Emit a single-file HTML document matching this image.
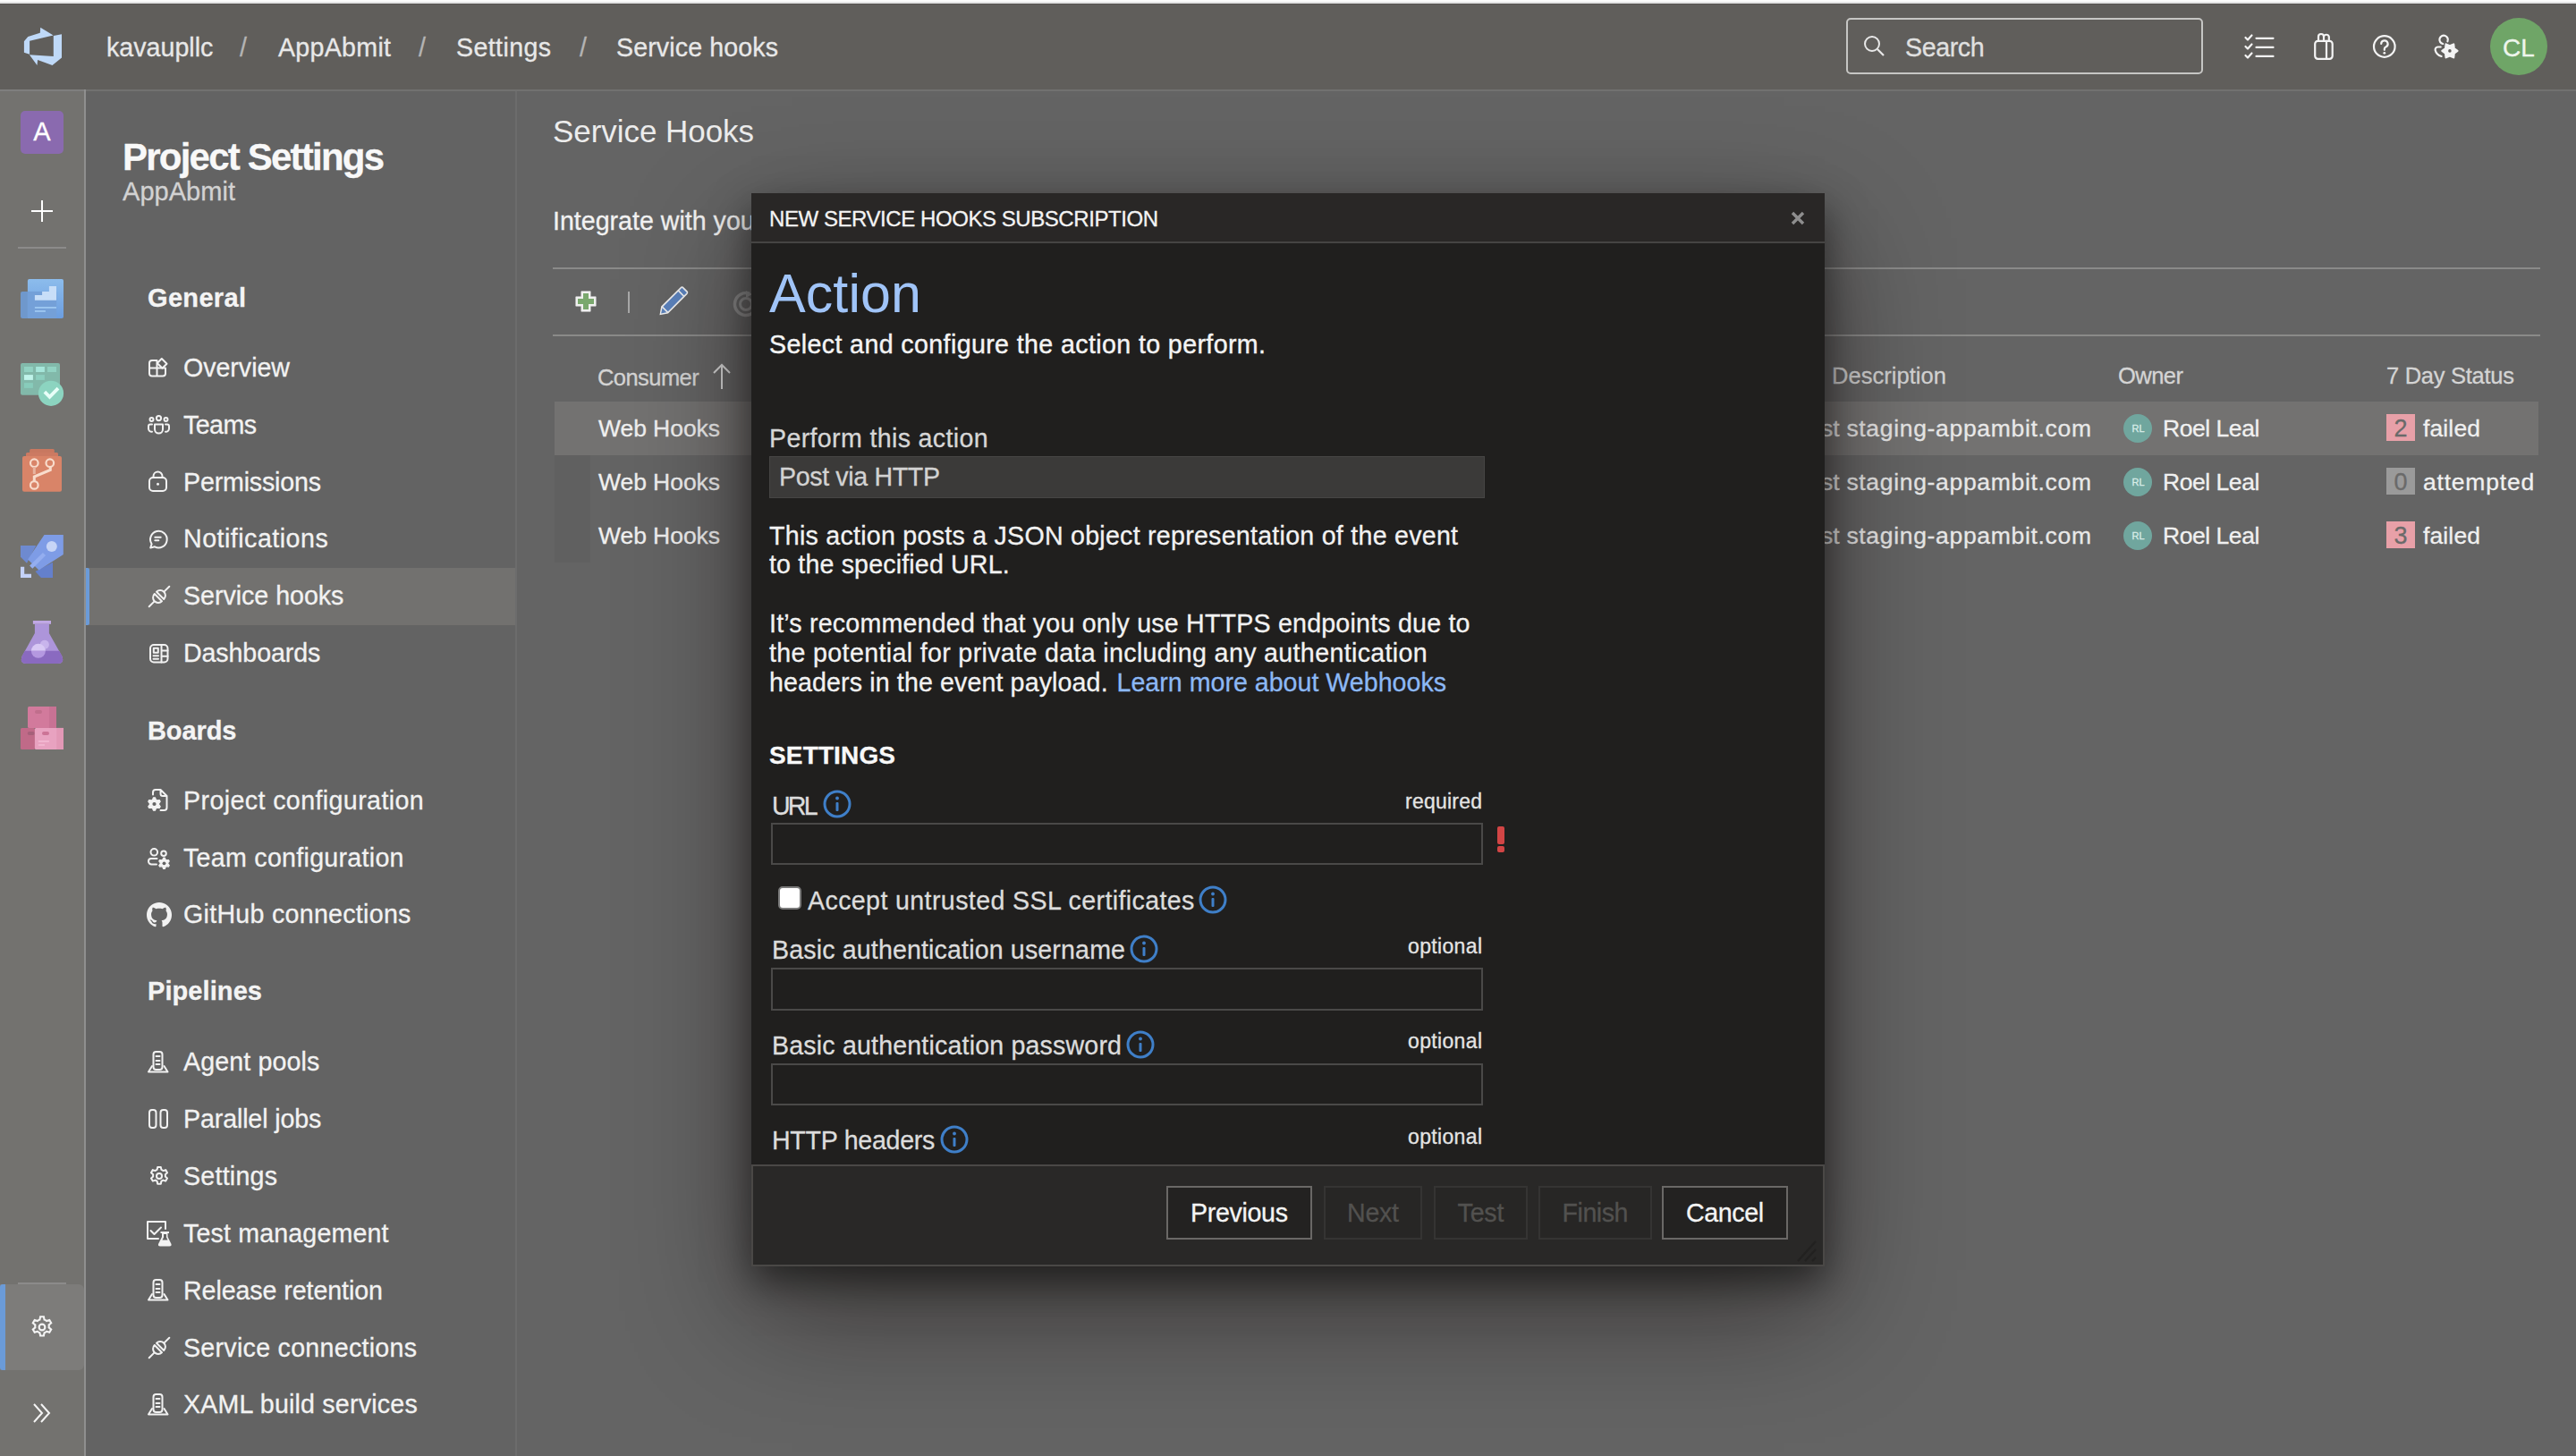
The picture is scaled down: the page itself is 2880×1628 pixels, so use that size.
<!DOCTYPE html>
<html><head><meta charset="utf-8"><title>Service hooks</title>
<style>
html,body{margin:0;padding:0;width:2880px;height:1628px;overflow:hidden;background:#646464}
body{position:relative;font-family:"Liberation Sans", sans-serif}
.t{position:absolute;white-space:nowrap;font-family:"Liberation Sans", sans-serif;-webkit-text-stroke-width:0.3px}
svg{overflow:visible}
</style></head><body>
<div style="position:absolute;left:0px;top:0px;width:2880px;height:2px;background:#fbfbfb"></div>
<div style="position:absolute;left:0px;top:2px;width:2880px;height:2px;background:#e4e4e4"></div>
<div style="position:absolute;left:0px;top:4px;width:2880px;height:1px;background:#575552"></div>
<div style="position:absolute;left:0px;top:5px;width:2880px;height:95px;background:#605e5b"></div>
<div style="position:absolute;left:0px;top:100px;width:2880px;height:1528px;background:#646464"></div>
<div style="position:absolute;left:0px;top:100px;width:2880px;height:2px;background:#717170"></div>
<div style="position:absolute;left:0px;top:100px;width:94px;height:1528px;background:#73726f"></div>
<div style="position:absolute;left:0px;top:100px;width:94px;height:2px;background:#7f7f7e"></div>
<div style="position:absolute;left:94px;top:100px;width:2px;height:1528px;background:#8f8f8f"></div>
<div style="position:absolute;left:96px;top:102px;width:480px;height:1526px;background:#636363"></div>
<div style="position:absolute;left:576px;top:102px;width:2px;height:1526px;background:#6c6c6c"></div>
<svg style="position:absolute;left:20px;top:25px;" width="56" height="56" viewBox="0 0 56 56"><path fill="#bfd9f8" d="M25.2 5.8 L39.6 14.6 L13.1 20.8 L13.1 35.8 L6.9 33.7 L6.9 21.2 L11.3 16 L24.8 11.7 Z"/><path fill="#bfd9f8" d="M39.8 15 L49 13.3 L49 39.6 L38.5 48 L22.1 42.1 L21.5 47.9 L12.9 36.2 L39.8 37.9 Z"/></svg>
<div class="t" style="left:119px;top:33.09px;font-size:28.6px;line-height:40px;color:#e8e8e8;font-weight:400;letter-spacing:0.023px;">kavaupllc</div>
<div class="t" style="left:268px;top:33.09px;font-size:28.6px;line-height:40px;color:#b4b4b4;font-weight:400;">/</div>
<div class="t" style="left:311px;top:33.09px;font-size:28.6px;line-height:40px;color:#e8e8e8;font-weight:400;letter-spacing:0.290px;">AppAbmit</div>
<div class="t" style="left:468px;top:33.09px;font-size:28.6px;line-height:40px;color:#b4b4b4;font-weight:400;">/</div>
<div class="t" style="left:510px;top:33.09px;font-size:28.6px;line-height:40px;color:#e8e8e8;font-weight:400;letter-spacing:0.382px;">Settings</div>
<div class="t" style="left:648px;top:33.09px;font-size:28.6px;line-height:40px;color:#b4b4b4;font-weight:400;">/</div>
<div class="t" style="left:689px;top:33.09px;font-size:28.6px;line-height:40px;color:#e8e8e8;font-weight:400;letter-spacing:0.117px;">Service hooks</div>
<div style="position:absolute;left:2064px;top:20px;width:399px;height:63px;box-sizing:border-box;border:2px solid #c6c6c4;border-radius:5px"></div>
<svg style="position:absolute;left:2083px;top:39px;" width="25" height="25" viewBox="0 0 25 25"><circle cx="10" cy="10" r="8" fill="none" stroke="#e8e8e8" stroke-width="2"/><path d="M16 16 L23 23" stroke="#e8e8e8" stroke-width="2.2"/></svg>
<div class="t" style="left:2130px;top:33.09px;font-size:28.6px;line-height:40px;color:#e0e0e0;font-weight:400;letter-spacing:-0.382px;">Search</div>
<svg style="position:absolute;left:2490px;top:25px;" width="60" height="50" viewBox="0 0 60 50"><path fill="none" stroke="#f4f4f4" stroke-width="2.2" stroke-linecap="round" stroke-linejoin="round" d="M20.5 17 L23 19.5 L27.5 14.5 M20.5 27 L23 29.5 L27.5 24.5 M20.5 37 L23 39.5 L27.5 34.5"/><path fill="none" stroke="#f4f4f4" stroke-width="2.2" stroke-linecap="round" stroke-linejoin="round" d="M32.5 17.8 H51.5 M32.5 27.9 H51.5 M32.5 37.9 H51.5"/></svg>
<svg style="position:absolute;left:2580px;top:30px;" width="40" height="45" viewBox="0 0 40 45"><rect fill="none" stroke="#f4f4f4" stroke-width="2.2" stroke-linecap="round" stroke-linejoin="round" x="8.2" y="15.8" width="19.5" height="20" rx="3.2"/><path fill="none" stroke="#f4f4f4" stroke-width="2.2" stroke-linecap="round" stroke-linejoin="round" d="M21 15.8 V35.8 M12 15.8 V11 a3 3 0 0 1 6 0 V15.8 M18 11 a3 3 0 0 1 5.8 0 V15.8"/></svg>
<svg style="position:absolute;left:2650px;top:36px;" width="32" height="32" viewBox="0 0 32 32"><circle fill="none" stroke="#f4f4f4" stroke-width="2.2" stroke-linecap="round" stroke-linejoin="round" cx="15.8" cy="16" r="11.8"/><path fill="none" stroke="#f4f4f4" stroke-width="2.2" stroke-linecap="round" stroke-linejoin="round" d="M12.2 13 a3.7 3.7 0 1 1 5.2 3.4 c-1.1.5-1.6 1.1-1.6 2.3 V19.8"/><circle cx="15.8" cy="23.3" r="1.4" fill="#f4f4f4"/></svg>
<svg style="position:absolute;left:2715px;top:32px;" width="40" height="40" viewBox="0 0 40 40"><path fill="none" stroke="#f4f4f4" stroke-width="2.2" stroke-linecap="round" stroke-linejoin="round" d="M16.2 17 A4.7 4.7 0 1 1 21.4 14.3"/><path fill="none" stroke="#f4f4f4" stroke-width="2.2" stroke-linecap="round" stroke-linejoin="round" d="M13.7 20.5 H10.5 a3 3 0 0 0 -2.8 3.7 C8.5 27.5 11 30 14.6 31"/><path d="M32.50 24.90 L28.75 27.70 L28.20 32.35 L23.90 30.50 L19.60 32.35 L19.05 27.70 L15.30 24.90 L19.05 22.10 L19.60 17.45 L23.90 19.30 L28.20 17.45 L28.75 22.10 Z" fill="#f4f4f4" stroke="#f4f4f4" stroke-width="2.2" stroke-linejoin="round"/><circle cx="23.9" cy="24.9" r="5.319999999999999" fill="#f4f4f4"/><circle cx="23.9" cy="24.9" r="1.8" fill="#605e5b"/></svg>
<div style="position:absolute;left:2784px;top:20px;width:64px;height:64px;border-radius:50%;background:#6fa567"></div>
<div class="t" style="left:2798.10px;top:33.80px;font-size:28px;line-height:39px;color:#eef5ec;font-weight:400;">CL</div>
<div style="position:absolute;left:23px;top:124px;width:48px;height:48px;background:#8a6aaf;border-radius:5px"></div>
<div class="t" style="left:37.33px;top:127.45px;font-size:29px;line-height:41px;color:#ffffff;font-weight:400;">A</div>
<svg style="position:absolute;left:35px;top:224px;" width="24" height="24" viewBox="0 0 24 24"><path d="M12 0 V24 M0 12 H24" stroke="#ffffff" stroke-width="2"/></svg>
<div style="position:absolute;left:20px;top:276px;width:54px;height:2px;background:#8c8b8a"></div>
<svg style="position:absolute;left:18px;top:305px;" width="58" height="58" viewBox="0 0 58 58"><defs><linearGradient id="gov" x1="0" y1="0" x2="0" y2="1"><stop offset="0" stop-color="#8cbcec"/><stop offset="1" stop-color="#6c9ee0"/></linearGradient></defs><rect x="12.9" y="7" width="40.1" height="44" rx="2" fill="url(#gov)"/><rect x="5" y="20.9" width="9" height="30.1" rx="2" fill="#6f98cc"/><rect x="12.7" y="20.9" width="32.5" height="30.1" fill="#74a0d8"/><path d="M20.9 30.7 V25.1 H29.1 V21.1 H36.9 V14.9 H45 V30.7 Z" fill="#c8def8"/><rect x="20.9" y="38" width="24.1" height="1.9" fill="#9cc6f0"/><rect x="20.9" y="42" width="12" height="1.9" fill="#9cc6f0"/></svg>
<svg style="position:absolute;left:18px;top:400px;" width="58" height="58" viewBox="0 0 58 58"><rect x="5" y="6" width="44" height="35.8" rx="2" fill="#82b9aa"/><rect x="9" y="10" width="9.9" height="6" fill="#92d2c2"/><rect x="22.1" y="10" width="9.8" height="6" fill="#a6e6da"/><rect x="35" y="10" width="10" height="6" fill="#92d2c2"/><rect x="9" y="19.1" width="9.9" height="5.8" fill="#c0f4ea"/><rect x="22.1" y="19.1" width="9.8" height="5.8" fill="#8ccfbe"/><rect x="9" y="28.1" width="9.9" height="5.8" fill="#88ccbb"/><circle cx="39" cy="39.8" r="14.1" fill="#8cd4c0"/><path d="M31.9 38.2 L37.5 43.8 L47 34.2" fill="none" stroke="#e8fff8" stroke-width="3.8"/></svg>
<svg style="position:absolute;left:18px;top:496px;" width="58" height="58" viewBox="0 0 58 58"><rect x="15.1" y="6" width="27.7" height="5" rx="1.5" fill="#c87860"/><rect x="11" y="10" width="36" height="5" rx="1.5" fill="#cc7a62"/><rect x="7" y="14.1" width="44" height="39.7" rx="2" fill="#d98468"/><g fill="none" stroke="#f8dccc" stroke-width="2.2"><circle cx="20.3" cy="21.7" r="4.3"/><circle cx="37.8" cy="21.7" r="4.3"/><circle cx="20.3" cy="46.4" r="4.3"/></g><path d="M20.3 42.1 V37 L38.3 29.5 V26" fill="none" stroke="#f8dccc" stroke-width="3"/><path d="M20.3 26 V34" stroke="#e8b4a0" stroke-width="3"/></svg>
<svg style="position:absolute;left:18px;top:592px;" width="58" height="58" viewBox="0 0 58 58"><path d="M5 18.1 H22.3 L12 37.8 L5 30.7 Z" fill="#6e8ad0"/><path d="M41 36.7 V54 H27.9 L21.5 47 Z" fill="#6480cc"/><path d="M31.5 6 H52.8 V27.9 L25.5 45.6 L13.1 33.5 Z" fill="#7e9ce6"/><circle cx="39.8" cy="18.9" r="6" fill="#c6d4f6"/><path d="M31.5 27.5 L16.7 42.2" stroke="#94aef0" stroke-width="4.5"/><path d="M7.1 41.8 V51.9 H17" fill="none" stroke="#c4d2f8" stroke-width="4.2"/></svg>
<svg style="position:absolute;left:18px;top:688px;" width="58" height="58" viewBox="0 0 58 58"><rect x="18.9" y="6" width="20.1" height="3.8" fill="#c0a8e4"/><path d="M20.9 9.8 H36.9 V19.9 L51.5 46 Q54 54 47 54 H11 Q4 54 6.5 46 L20.9 19.9 Z" fill="#ad95da"/><path d="M9.7 39.8 H48.3 L51.5 46 Q54 54 47 54 H11 Q4 54 6.5 46 Z" fill="#8a6ac0"/><circle cx="31.9" cy="32.7" r="5" fill="#c8b4ec"/><path d="M16.9 39.8 a8 8 0 0 1 16 0 Z" fill="#d8c8f4"/><path d="M16.9 39.8 a8 8 0 0 0 16 0 Z" fill="#b498e0"/></svg>
<svg style="position:absolute;left:18px;top:784px;" width="58" height="58" viewBox="0 0 58 58"><rect x="13" y="6" width="32" height="24" rx="1.5" fill="#d27a9c"/><rect x="37" y="6" width="8" height="24" fill="#c87294"/><rect x="21" y="10" width="8" height="4" rx="2" fill="#c06e8c"/><rect x="5" y="29.9" width="16" height="24.1" rx="1.5" fill="#c06a88"/><rect x="12.7" y="34" width="8" height="4" rx="2" fill="#a6607a"/><rect x="20.9" y="29.9" width="32.1" height="24.1" rx="1.5" fill="#e8a2c0"/><rect x="45.2" y="29.9" width="7.8" height="24.1" fill="#e298b6"/><rect x="29" y="34" width="8" height="4" rx="2" fill="#cc7496"/><rect x="24.9" y="44" width="12" height="1.8" fill="#f2b8d2"/><rect x="24.9" y="48.2" width="7.1" height="1.6" fill="#f2b8d2"/></svg>
<div style="position:absolute;left:20px;top:1434px;width:54px;height:2px;background:#8c8b8a"></div>
<div style="position:absolute;left:0px;top:1436px;width:94px;height:96px;background:#7d7c7a;border-radius:0 6px 6px 0"></div>
<div style="position:absolute;left:0px;top:1436px;width:6px;height:96px;background:#6b9bd8;border-radius:3px 0 0 3px"></div>
<svg style="position:absolute;left:35px;top:1472px;" width="24" height="24" viewBox="0 0 24 24"><g transform="translate(12,12) scale(1.12) translate(-12,-12)"><path fill="none" stroke="#f4f4f4" stroke-width="1.9" d="M10.3 1.5 h3.4 l.6 3 a8 8 0 0 1 2.2 1.3 l2.9-1 1.7 2.9-2.3 2 a8 8 0 0 1 0 2.6 l2.3 2-1.7 2.9-2.9-1 a8 8 0 0 1-2.2 1.3 l-.6 3 h-3.4 l-.6-3 a8 8 0 0 1-2.2-1.3 l-2.9 1-1.7-2.9 2.3-2 a8 8 0 0 1 0-2.6 l-2.3-2 1.7-2.9 2.9 1 a8 8 0 0 1 2.2-1.3 Z"/><circle cx="12" cy="12" r="3" fill="none" stroke="#f4f4f4" stroke-width="1.9"/></g></svg>
<svg style="position:absolute;left:37px;top:1569px;" width="22" height="22" viewBox="0 0 22 22"><path d="M1 1 L10 11 L1 21 M9 1 L18 11 L9 21" fill="none" stroke="#f4f4f4" stroke-width="2"/></svg>
<div class="t" style="left:137px;top:145.95px;font-size:42px;line-height:59px;color:#f8f8f8;font-weight:700;letter-spacing:-1.783px;">Project Settings</div>
<div class="t" style="left:137px;top:194.45px;font-size:29px;line-height:41px;color:#d2d2d2;font-weight:400;letter-spacing:0.038px;">AppAbmit</div>
<div class="t" style="left:165px;top:313.45px;font-size:29px;line-height:41px;color:#f4f4f4;font-weight:700;letter-spacing:0.333px;">General</div>
<div style="position:absolute;left:96px;top:635px;width:480px;height:64px;background:#72716f"></div>
<div style="position:absolute;left:96px;top:635px;width:4px;height:64px;background:#6b9bd8;border-radius:0 2px 2px 0"></div>
<div class="t" style="left:205px;top:391.09px;font-size:28.6px;line-height:40px;color:#f2f2f2;font-weight:400;letter-spacing:-0.025px;">Overview</div>
<div class="t" style="left:205px;top:455.09px;font-size:28.6px;line-height:40px;color:#f2f2f2;font-weight:400;letter-spacing:-0.555px;">Teams</div>
<div class="t" style="left:205px;top:519.09px;font-size:28.6px;line-height:40px;color:#f2f2f2;font-weight:400;letter-spacing:-0.172px;">Permissions</div>
<div class="t" style="left:205px;top:582.09px;font-size:28.6px;line-height:40px;color:#f2f2f2;font-weight:400;letter-spacing:0.496px;">Notifications</div>
<div class="t" style="left:205px;top:646.09px;font-size:28.6px;line-height:40px;color:#f2f2f2;font-weight:400;letter-spacing:-0.016px;">Service hooks</div>
<div class="t" style="left:205px;top:710.09px;font-size:28.6px;line-height:40px;color:#f2f2f2;font-weight:400;letter-spacing:-0.099px;">Dashboards</div>
<div class="t" style="left:165px;top:797.45px;font-size:29px;line-height:41px;color:#f4f4f4;font-weight:700;letter-spacing:-0.104px;">Boards</div>
<div class="t" style="left:205px;top:875.09px;font-size:28.6px;line-height:40px;color:#f2f2f2;font-weight:400;letter-spacing:0.401px;">Project configuration</div>
<div class="t" style="left:205px;top:938.59px;font-size:28.6px;line-height:40px;color:#f2f2f2;font-weight:400;letter-spacing:0.288px;">Team configuration</div>
<div class="t" style="left:205px;top:1002.09px;font-size:28.6px;line-height:40px;color:#f2f2f2;font-weight:400;letter-spacing:0.285px;">GitHub connections</div>
<div class="t" style="left:165px;top:1088.45px;font-size:29px;line-height:41px;color:#f4f4f4;font-weight:700;letter-spacing:0.084px;">Pipelines</div>
<div class="t" style="left:205px;top:1167.09px;font-size:28.6px;line-height:40px;color:#f2f2f2;font-weight:400;letter-spacing:0.137px;">Agent pools</div>
<div class="t" style="left:205px;top:1231.09px;font-size:28.6px;line-height:40px;color:#f2f2f2;font-weight:400;letter-spacing:-0.122px;">Parallel jobs</div>
<div class="t" style="left:205px;top:1295.09px;font-size:28.6px;line-height:40px;color:#f2f2f2;font-weight:400;letter-spacing:0.239px;">Settings</div>
<div class="t" style="left:205px;top:1359.09px;font-size:28.6px;line-height:40px;color:#f2f2f2;font-weight:400;letter-spacing:0.157px;">Test management</div>
<div class="t" style="left:205px;top:1422.59px;font-size:28.6px;line-height:40px;color:#f2f2f2;font-weight:400;letter-spacing:-0.071px;">Release retention</div>
<div class="t" style="left:205px;top:1487.09px;font-size:28.6px;line-height:40px;color:#f2f2f2;font-weight:400;letter-spacing:0.283px;">Service connections</div>
<div class="t" style="left:205px;top:1550.09px;font-size:28.6px;line-height:40px;color:#f2f2f2;font-weight:400;letter-spacing:0.206px;">XAML build services</div>
<svg style="position:absolute;left:166px;top:400px;" width="22" height="22" viewBox="0 0 22 22"><path fill="none" stroke="#f2f2f2" stroke-width="2" stroke-linecap="round" stroke-linejoin="round" d="M9.5 3 H4 a3 3 0 0 0 -3 3 V17.5 a3 3 0 0 0 3 3 H16 a3 3 0 0 0 3 -3 V11.5 H9.5 Z M1 11.5 H9.5 M9.5 11.5 V20.5"/><path fill="none" stroke="#f2f2f2" stroke-width="2" stroke-linecap="round" stroke-linejoin="round" d="M14.8 1 L20.5 6.7 L15.5 11.7 L9.8 6 Z"/></svg>
<svg style="position:absolute;left:165px;top:464px;" width="26" height="23" viewBox="0 0 26 23"><circle fill="none" stroke="#f2f2f2" stroke-width="2" stroke-linecap="round" stroke-linejoin="round" cx="12.5" cy="3.6" r="2.6"/><circle fill="none" stroke="#f2f2f2" stroke-width="2" stroke-linecap="round" stroke-linejoin="round" cx="4.5" cy="5" r="2"/><circle fill="none" stroke="#f2f2f2" stroke-width="2" stroke-linecap="round" stroke-linejoin="round" cx="20.5" cy="5" r="2"/><path fill="none" stroke="#f2f2f2" stroke-width="2" stroke-linecap="round" stroke-linejoin="round" d="M8 10.5 H17 V16 a4.5 4.5 0 0 1 -9 0 Z"/><path fill="none" stroke="#f2f2f2" stroke-width="2" stroke-linecap="round" stroke-linejoin="round" d="M5 10.5 H3 a2 2 0 0 0 -2 2 V15.5 a3.5 3.5 0 0 0 4 3.2 M20 10.5 H22 a2 2 0 0 1 2 2 V15.5 a3.5 3.5 0 0 1 -4 3.2"/></svg>
<svg style="position:absolute;left:166px;top:526px;" width="22" height="24" viewBox="0 0 22 24"><path fill="none" stroke="#f2f2f2" stroke-width="2" stroke-linecap="round" stroke-linejoin="round" d="M5.5 8 V6.5 a5 5 0 0 1 10 0 V8"/><rect fill="none" stroke="#f2f2f2" stroke-width="2" stroke-linecap="round" stroke-linejoin="round" x="1" y="8" width="19" height="15" rx="4"/><circle cx="10.5" cy="15.3" r="1.5" fill="#f2f2f2"/></svg>
<svg style="position:absolute;left:166px;top:592px;" width="22" height="22" viewBox="0 0 22 22"><path fill="none" stroke="#f2f2f2" stroke-width="2" stroke-linecap="round" stroke-linejoin="round" d="M2.2 20.6 L3.6 16.2 A9.3 9.3 0 1 1 7 19.3 Z"/><path fill="none" stroke="#f2f2f2" stroke-width="2" stroke-linecap="round" stroke-linejoin="round" d="M7.3 8.7 H13.7 M7.3 12.3 H11.3"/></svg>
<svg style="position:absolute;left:166px;top:655px;" width="24" height="24" viewBox="0 0 24 24"><g transform="translate(12,12) rotate(-45)"><path fill="none" stroke="#f2f2f2" stroke-width="2" stroke-linecap="round" stroke-linejoin="round" d="M-16 0 H-8 M8 0 H16"/><path fill="none" stroke="#f2f2f2" stroke-width="2" stroke-linecap="round" stroke-linejoin="round" d="M-1.6 -5.8 A5.8 5.8 0 0 0 -1.6 5.8 Z"/><path fill="none" stroke="#f2f2f2" stroke-width="2" stroke-linecap="round" stroke-linejoin="round" d="M1.6 -5.8 A5.8 5.8 0 0 1 1.6 5.8 Z"/></g></svg>
<svg style="position:absolute;left:167px;top:720px;" width="22" height="22" viewBox="0 0 22 22"><rect fill="none" stroke="#f2f2f2" stroke-width="2" stroke-linecap="round" stroke-linejoin="round" x="1" y="1" width="19.5" height="19.5" rx="4"/><path fill="none" stroke="#f2f2f2" stroke-width="2" stroke-linecap="round" stroke-linejoin="round" d="M13.5 1 V20.5 M13.5 7.5 H20.5 M13.5 13.8 H20.5 M4.5 13.2 H10 M4.5 16.8 H10"/><rect fill="none" stroke="#f2f2f2" stroke-width="2" stroke-linecap="round" stroke-linejoin="round" x="4.8" y="4.8" width="5" height="5"/></svg>
<svg style="position:absolute;left:165px;top:882px;" width="24" height="26" viewBox="0 0 24 26"><path fill="none" stroke="#f2f2f2" stroke-width="2" stroke-linecap="round" stroke-linejoin="round" d="M6 6.5 V4 a3 3 0 0 1 3 -3 H14.5 L21.5 8 V21 a3 3 0 0 1 -3 3 H14.5 M14.5 1 V5.5 a2.5 2.5 0 0 0 2.5 2.5 H21.5"/><path d="M6.55 9.76 L8.45 9.76 L9.46 12.28 L10.61 12.95 L13.29 12.56 L14.24 14.21 L12.57 16.33 L12.57 17.67 L14.24 19.79 L13.29 21.44 L10.61 21.05 L9.46 21.72 L8.45 24.24 L6.55 24.24 L5.54 21.72 L4.39 21.05 L1.71 21.44 L0.76 19.79 L2.43 17.67 L2.43 16.33 L0.76 14.21 L1.71 12.56 L4.39 12.95 L5.54 12.28 Z" fill="#f2f2f2" stroke="#f2f2f2" stroke-width="1.2" stroke-linejoin="round"/><circle cx="7.5" cy="17" r="2.1" fill="#636363"/></svg>
<svg style="position:absolute;left:165px;top:948px;" width="26" height="24" viewBox="0 0 26 24"><circle fill="none" stroke="#f2f2f2" stroke-width="2" stroke-linecap="round" stroke-linejoin="round" cx="7.3" cy="4.8" r="3.8"/><circle fill="none" stroke="#f2f2f2" stroke-width="2" stroke-linecap="round" stroke-linejoin="round" cx="18" cy="6.3" r="2.8"/><path fill="none" stroke="#f2f2f2" stroke-width="2" stroke-linecap="round" stroke-linejoin="round" d="M10.5 12 H4 a3 3 0 0 0 -3 3 a3.5 3.5 0 0 0 3.5 3.5 H10"/><path d="M17.69 11.15 L19.31 11.15 L20.16 13.29 L21.14 13.86 L23.42 13.53 L24.23 14.93 L22.80 16.73 L22.80 17.87 L24.23 19.67 L23.42 21.07 L21.14 20.74 L20.16 21.31 L19.31 23.45 L17.69 23.45 L16.84 21.31 L15.86 20.74 L13.58 21.07 L12.77 19.67 L14.20 17.87 L14.20 16.73 L12.77 14.93 L13.58 13.53 L15.86 13.86 L16.84 13.29 Z" fill="#f2f2f2" stroke="#f2f2f2" stroke-width="1.2" stroke-linejoin="round"/><circle cx="18.5" cy="17.3" r="1.9" fill="#636363"/></svg>
<svg style="position:absolute;left:164px;top:1009px;" width="28" height="28" viewBox="0 0 28 28"><path fill="#f2f2f2" d="M14 0 C6.27 0 0 6.27 0 14 c0 6.19 4.01 11.43 9.57 13.28 .7.13 .96-.3 .96-.67 v-2.6 c-3.9.85-4.72-1.66-4.72-1.66 -.64-1.62-1.560-2.05-1.56-2.05 -1.27-.87.1-.85.1-.85 1.4.1 2.14 1.44 2.14 1.44 1.25 2.14 3.28 1.52 4.08 1.16 .13-.9.49-1.52.89-1.87 -3.11-.35-6.39-1.56-6.39-6.94 0-1.53.55-2.79 1.44-3.77 -.14-.35-.62-1.780.14-3.71 0 0 1.17-.38 3.85 1.44 1.12-.31 2.32-.47 3.51-.47 1.19 0 2.39.16 3.51.47 2.67-1.81 3.85-1.44 3.85-1.44 .76 1.93.28 3.36.14 3.71 .9.98 1.44 2.24 1.44 3.77 0 5.39-3.28 6.58-6.4 6.93 .5.43.95 1.29.95 2.6 v3.85 c0 .37.25.81.96.67 C23.99 25.43 28 20.19 28 14 28 6.27 21.730 0 14 0 Z"/></svg>
<svg style="position:absolute;left:165px;top:1175px;" width="24" height="25" viewBox="0 0 24 25"><rect fill="none" stroke="#f2f2f2" stroke-width="2" stroke-linecap="round" stroke-linejoin="round" x="6.5" y="1" width="10" height="20" rx="3"/><path fill="none" stroke="#f2f2f2" stroke-width="2" stroke-linecap="round" stroke-linejoin="round" d="M9.5 6 H13.5 M9.5 11 H13.5 M9.5 15 H13.5"/><path fill="none" stroke="#f2f2f2" stroke-width="2" stroke-linecap="round" stroke-linejoin="round" d="M5 17 L1 23.5 H22.5 L18.5 17"/></svg>
<svg style="position:absolute;left:166px;top:1240px;" width="23" height="22" viewBox="0 0 23 22"><rect fill="none" stroke="#f2f2f2" stroke-width="2" stroke-linecap="round" stroke-linejoin="round" x="1" y="1" width="7.5" height="20" rx="3"/><rect fill="none" stroke="#f2f2f2" stroke-width="2" stroke-linecap="round" stroke-linejoin="round" x="13.5" y="1" width="7.5" height="20" rx="3"/></svg>
<svg style="position:absolute;left:167px;top:1304px;" width="22" height="22" viewBox="0 0 22 22"><path fill="none" stroke="#f2f2f2" stroke-width="2" stroke-linecap="round" stroke-linejoin="round" d="M9.2 1 h3.6 l.6 2.9 a7.5 7.5 0 0 1 2 1.2 l2.8-1 1.8 3.1-2.2 2 a7.5 7.5 0 0 1 0 2.3 l2.2 2-1.8 3.1-2.8-1 a7.5 7.5 0 0 1-2 1.2 l-.6 2.9 h-3.6 l-.6-2.9 a7.5 7.5 0 0 1-2-1.2 l-2.8 1-1.8-3.1 2.2-2 a7.5 7.5 0 0 1 0-2.3 l-2.2-2 1.8-3.1 2.8 1 a7.5 7.5 0 0 1 2-1.2 Z"/><circle fill="none" stroke="#f2f2f2" stroke-width="2" stroke-linecap="round" stroke-linejoin="round" cx="11" cy="11" r="3"/></svg>
<svg style="position:absolute;left:164px;top:1365px;" width="28" height="29" viewBox="0 0 28 29"><path fill="none" stroke="#f2f2f2" stroke-width="2" stroke-linecap="round" stroke-linejoin="round" d="M13 20 H1 V1 H21 V9"/><path fill="none" stroke="#f2f2f2" stroke-width="2" stroke-linecap="round" stroke-linejoin="round" d="M4.5 11 L8.5 15 L16 7.5"/><path fill="#f2f2f2" d="M15.5 12 H25 V14 H23.5 V18 L27.5 26 Q28 28.5 25.5 28.5 H15 Q12.5 28.5 13 26 L17 18 V14 H15.5 Z"/><path fill="#636363" d="M19 15 H22 V18.5 L23.5 21.5 H17.5 L19 18.5 Z"/></svg>
<svg style="position:absolute;left:165px;top:1430px;" width="24" height="25" viewBox="0 0 24 25"><rect fill="none" stroke="#f2f2f2" stroke-width="2" stroke-linecap="round" stroke-linejoin="round" x="6.5" y="1" width="10" height="20" rx="3"/><path fill="none" stroke="#f2f2f2" stroke-width="2" stroke-linecap="round" stroke-linejoin="round" d="M9.5 6 H13.5 M9.5 11 H13.5 M9.5 15 H13.5"/><path fill="none" stroke="#f2f2f2" stroke-width="2" stroke-linecap="round" stroke-linejoin="round" d="M5 17 L1 23.5 H22.5 L18.5 17"/></svg>
<svg style="position:absolute;left:166px;top:1495px;" width="24" height="24" viewBox="0 0 24 24"><g transform="translate(12,12) rotate(-45)"><path fill="none" stroke="#f2f2f2" stroke-width="2" stroke-linecap="round" stroke-linejoin="round" d="M-16 0 H-8 M8 0 H16"/><path fill="none" stroke="#f2f2f2" stroke-width="2" stroke-linecap="round" stroke-linejoin="round" d="M-1.6 -5.8 A5.8 5.8 0 0 0 -1.6 5.8 Z"/><path fill="none" stroke="#f2f2f2" stroke-width="2" stroke-linecap="round" stroke-linejoin="round" d="M1.6 -5.8 A5.8 5.8 0 0 1 1.6 5.8 Z"/></g></svg>
<svg style="position:absolute;left:165px;top:1558px;" width="24" height="25" viewBox="0 0 24 25"><rect fill="none" stroke="#f2f2f2" stroke-width="2" stroke-linecap="round" stroke-linejoin="round" x="6.5" y="1" width="10" height="20" rx="3"/><path fill="none" stroke="#f2f2f2" stroke-width="2" stroke-linecap="round" stroke-linejoin="round" d="M9.5 6 H13.5 M9.5 11 H13.5 M9.5 15 H13.5"/><path fill="none" stroke="#f2f2f2" stroke-width="2" stroke-linecap="round" stroke-linejoin="round" d="M5 17 L1 23.5 H22.5 L18.5 17"/></svg>
<div class="t" style="left:618px;top:122.37px;font-size:35px;line-height:49px;color:#ececec;font-weight:400;letter-spacing:-0.053px;-webkit-text-stroke-width:0;">Service Hooks</div>
<div class="t" style="left:618px;top:227.09px;font-size:28.6px;line-height:40px;color:#f2f2f2;font-weight:400;">Integrate with your favorite services by notifying them when events happen in your project.</div>
<div style="position:absolute;left:618px;top:299px;width:2222px;height:2px;background:#8a8a89"></div>
<div style="position:absolute;left:618px;top:374px;width:2222px;height:2px;background:#8a8a89"></div>
<svg style="position:absolute;left:643px;top:325px;" width="24" height="24" viewBox="0 0 24 24"><path d="M6.85 0.8 H17.15 V6.85 H23.2 V17.15 H17.15 V23.2 H6.85 V17.15 H0.8 V6.85 H6.85 Z" fill="#f0f0f0" stroke="#f0f0f0" stroke-width="0.6" stroke-linejoin="round"/><path d="M9 3 H15 V9 H21 V15 H15 V21 H9 V15 H3 V9 H9 Z" fill="#7aa86e"/></svg>
<div style="position:absolute;left:702px;top:326px;width:2px;height:24px;background:#a8a8a8"></div>
<svg style="position:absolute;left:730px;top:315px;" width="46" height="46" viewBox="0 0 46 46"><g transform="translate(22.3,22.3) rotate(-45)"><path d="M-21 0 L-13 -5.5 H17 a3 3 0 0 1 3 3 V2.5 a3 3 0 0 1 -3 3 H-13 Z" fill="#f0f0f0"/><path d="M-18.6 0 L-12.5 -3.9 H18.2 V3.9 H-12.5 Z" fill="#5b82bc"/><path d="M-12.5 -4.5 V4.5 M13 -4.5 V4.5" stroke="#f0f0f0" stroke-width="1.6"/></g></svg>
<svg style="position:absolute;left:818px;top:324px;" width="34" height="34" viewBox="0 0 34 34"><path d="M28.5 16 A12.5 12.5 0 1 1 20 4.2" fill="none" stroke="#8a8a8a" stroke-width="3.5"/><circle cx="16" cy="16" r="6.5" fill="none" stroke="#8a8a8a" stroke-width="3"/><path d="M16 1 L23 5 L16 9 Z" fill="#8a8a8a"/></svg>
<div class="t" style="left:668px;top:404.16px;font-size:25.5px;line-height:36px;color:#d4d4d4;font-weight:400;letter-spacing:-0.563px;">Consumer</div>
<svg style="position:absolute;left:796px;top:406px;" width="22" height="30" viewBox="0 0 22 30"><path d="M11 2 V29 M2 11 L11 2 L20 11" fill="none" stroke="#d4d4d4" stroke-width="2"/></svg>
<div class="t" style="left:2048px;top:402.16px;font-size:25.5px;line-height:36px;color:#d4d4d4;font-weight:400;letter-spacing:0.044px;">Description</div>
<div class="t" style="left:2368px;top:402.16px;font-size:25.5px;line-height:36px;color:#d4d4d4;font-weight:400;letter-spacing:-0.527px;">Owner</div>
<div class="t" style="left:2668px;top:402.16px;font-size:25.5px;line-height:36px;color:#d4d4d4;font-weight:400;letter-spacing:-0.273px;">7 Day Status</div>
<div style="position:absolute;left:620px;top:449px;width:2218px;height:60px;background:#737271"></div>
<div style="position:absolute;left:620px;top:509px;width:40px;height:120px;background:#606060"></div>
<div class="t" style="left:669px;top:460.82px;font-size:26.5px;line-height:37px;color:#f0f0f0;font-weight:400;letter-spacing:-0.062px;">Web Hooks</div>
<div class="t" style="left:2003.57px;top:460.82px;font-size:26.5px;line-height:37px;color:#e8e8e8;font-weight:400;">Post</div>
<div class="t" style="left:2064.4px;top:460.82px;font-size:26.5px;line-height:37px;color:#e8e8e8;font-weight:400;letter-spacing:0.678px;">staging-appambit.com</div>
<div style="position:absolute;left:2374px;top:463.0px;width:32px;height:32px;border-radius:50%;background:#70a69e"></div>
<div class="t" style="left:2383.47px;top:471.69px;font-size:11px;line-height:15px;color:#d8ece8;font-weight:400;">RL</div>
<div class="t" style="left:2418px;top:460.82px;font-size:26.5px;line-height:37px;color:#f0f0f0;font-weight:400;letter-spacing:-0.459px;">Roel Leal</div>
<div class="t" style="left:669px;top:520.82px;font-size:26.5px;line-height:37px;color:#f0f0f0;font-weight:400;letter-spacing:-0.062px;">Web Hooks</div>
<div class="t" style="left:2003.57px;top:520.82px;font-size:26.5px;line-height:37px;color:#e8e8e8;font-weight:400;">Post</div>
<div class="t" style="left:2064.4px;top:520.82px;font-size:26.5px;line-height:37px;color:#e8e8e8;font-weight:400;letter-spacing:0.678px;">staging-appambit.com</div>
<div style="position:absolute;left:2374px;top:523.0px;width:32px;height:32px;border-radius:50%;background:#70a69e"></div>
<div class="t" style="left:2383.47px;top:531.69px;font-size:11px;line-height:15px;color:#d8ece8;font-weight:400;">RL</div>
<div class="t" style="left:2418px;top:520.82px;font-size:26.5px;line-height:37px;color:#f0f0f0;font-weight:400;letter-spacing:-0.459px;">Roel Leal</div>
<div class="t" style="left:669px;top:580.82px;font-size:26.5px;line-height:37px;color:#f0f0f0;font-weight:400;letter-spacing:-0.062px;">Web Hooks</div>
<div class="t" style="left:2003.57px;top:580.82px;font-size:26.5px;line-height:37px;color:#e8e8e8;font-weight:400;">Post</div>
<div class="t" style="left:2064.4px;top:580.82px;font-size:26.5px;line-height:37px;color:#e8e8e8;font-weight:400;letter-spacing:0.678px;">staging-appambit.com</div>
<div style="position:absolute;left:2374px;top:583.0px;width:32px;height:32px;border-radius:50%;background:#70a69e"></div>
<div class="t" style="left:2383.47px;top:591.69px;font-size:11px;line-height:15px;color:#d8ece8;font-weight:400;">RL</div>
<div class="t" style="left:2418px;top:580.82px;font-size:26.5px;line-height:37px;color:#f0f0f0;font-weight:400;letter-spacing:-0.459px;">Roel Leal</div>
<div style="position:absolute;left:2668px;top:463.0px;width:32px;height:30px;background:#e8a0a8"></div>
<div class="t" style="left:2676.48px;top:460.14px;font-size:27px;line-height:38px;color:#6a6a6a;font-weight:400;">2</div>
<div class="t" style="left:2709px;top:460.82px;font-size:26.5px;line-height:37px;color:#f0f0f0;font-weight:400;letter-spacing:0.128px;">failed</div>
<div style="position:absolute;left:2668px;top:523.0px;width:32px;height:30px;background:#9a9a9a"></div>
<div class="t" style="left:2676.48px;top:520.14px;font-size:27px;line-height:38px;color:#6a6a6a;font-weight:400;">0</div>
<div class="t" style="left:2709px;top:520.82px;font-size:26.5px;line-height:37px;color:#f0f0f0;font-weight:400;letter-spacing:0.793px;">attempted</div>
<div style="position:absolute;left:2668px;top:583.0px;width:32px;height:30px;background:#e8a0a8"></div>
<div class="t" style="left:2676.48px;top:580.14px;font-size:27px;line-height:38px;color:#6a6a6a;font-weight:400;">3</div>
<div class="t" style="left:2709px;top:580.82px;font-size:26.5px;line-height:37px;color:#f0f0f0;font-weight:400;letter-spacing:0.128px;">failed</div>
<div style="position:absolute;left:840px;top:216px;width:1200px;height:1200px;background:#201f1e;box-shadow:0 18px 40px rgba(0,0,0,0.5), 0 50px 130px rgba(10,5,0,0.45)"></div>
<div style="position:absolute;left:840px;top:216px;width:1200px;height:54px;background:#292726"></div>
<div style="position:absolute;left:840px;top:270px;width:1200px;height:2px;background:#454443"></div>
<div class="t" style="left:860px;top:227.68px;font-size:24px;line-height:34px;color:#f4f4f4;font-weight:400;letter-spacing:-0.436px;">NEW SERVICE HOOKS SUBSCRIPTION</div>
<svg style="position:absolute;left:2003px;top:237px;" width="14" height="14" viewBox="0 0 14 14"><path d="M1 1 L13 13 M13 1 L1 13" stroke="#8e8e8e" stroke-width="3.4"/></svg>
<div class="t" style="left:860px;top:286.36px;font-size:61px;line-height:85px;color:#a0c4f8;font-weight:400;letter-spacing:0.091px;-webkit-text-stroke-width:0;">Action</div>
<div class="t" style="left:860px;top:365.09px;font-size:28.6px;line-height:40px;color:#f4f4f4;font-weight:400;letter-spacing:0.385px;-webkit-text-stroke:0.4px #f4f4f4;">Select and configure the action to perform.</div>
<div class="t" style="left:860px;top:470.09px;font-size:28.6px;line-height:40px;color:#d6d6d6;font-weight:400;letter-spacing:0.346px;">Perform this action</div>
<div style="position:absolute;left:860px;top:510px;width:800px;height:47px;background:#3b3a39;box-sizing:border-box;border:1px solid #464544"></div>
<div class="t" style="left:871px;top:513.09px;font-size:28.6px;line-height:40px;color:#d2d2d2;font-weight:400;letter-spacing:-0.359px;">Post via HTTP</div>
<div class="t" style="left:860px;top:579.09px;font-size:28.6px;line-height:40px;color:#f2f2f2;font-weight:400;letter-spacing:0.259px;">This action posts a JSON object representation of the event</div>
<div class="t" style="left:860px;top:611.09px;font-size:28.6px;line-height:40px;color:#f2f2f2;font-weight:400;letter-spacing:0.163px;">to the specified URL.</div>
<div class="t" style="left:860px;top:677.09px;font-size:28.6px;line-height:40px;color:#f2f2f2;font-weight:400;letter-spacing:0.206px;">It&rsquo;s recommended that you only use HTTPS endpoints due to</div>
<div class="t" style="left:860px;top:710.09px;font-size:28.6px;line-height:40px;color:#f2f2f2;font-weight:400;letter-spacing:0.351px;">the potential for private data including any authentication</div>
<div class="t" style="left:860px;top:743.09px;font-size:28.6px;line-height:40px;color:#f2f2f2;font-weight:400;letter-spacing:0.122px;">headers in the event payload.</div>
<div class="t" style="left:1248.5px;top:743.09px;font-size:28.6px;line-height:40px;color:#8cb8f5;font-weight:400;letter-spacing:0.010px;">Learn more about Webhooks</div>
<div class="t" style="left:860px;top:825.30px;font-size:28px;line-height:39px;color:#f8f8f8;font-weight:700;letter-spacing:0.141px;">SETTINGS</div>
<div class="t" style="left:863px;top:880.69px;font-size:28.6px;line-height:40px;color:#dcdcdc;font-weight:400;letter-spacing:-2.802px;">URL</div>
<svg style="position:absolute;left:920px;top:883px;" width="32" height="32" viewBox="0 0 32 32"><circle cx="16" cy="16" r="14" fill="none" stroke="#3f7fc8" stroke-width="3"/><rect x="14.5" y="14" width="3" height="10" rx="1" fill="#3f7fc8"/><circle cx="16" cy="9.5" r="1.9" fill="#3f7fc8"/></svg>
<div class="t" style="left:1571.00px;top:880.03px;font-size:23px;line-height:32px;color:#e4e4e4;font-weight:400;letter-spacing:0.230px;">required</div>
<div style="position:absolute;left:862px;top:920px;width:796px;height:47px;box-sizing:border-box;border:2px solid #4a4948"></div>
<div style="position:absolute;left:1674px;top:924px;width:8px;height:20px;background:#d24545;border-radius:2px"></div>
<div style="position:absolute;left:1674px;top:946px;width:8px;height:7px;background:#d24545;border-radius:2px"></div>
<div style="position:absolute;left:870px;top:991px;width:26px;height:26px;box-sizing:border-box;background:#ffffff;border:2px solid #7a7a7a;border-radius:5px"></div>
<div class="t" style="left:903px;top:987.09px;font-size:28.6px;line-height:40px;color:#dcdcdc;font-weight:400;letter-spacing:0.384px;">Accept untrusted SSL certificates</div>
<svg style="position:absolute;left:1340px;top:990px;" width="32" height="32" viewBox="0 0 32 32"><circle cx="16" cy="16" r="14" fill="none" stroke="#3f7fc8" stroke-width="3"/><rect x="14.5" y="14" width="3" height="10" rx="1" fill="#3f7fc8"/><circle cx="16" cy="9.5" r="1.9" fill="#3f7fc8"/></svg>
<div class="t" style="left:863px;top:1042.09px;font-size:28.6px;line-height:40px;color:#dcdcdc;font-weight:400;letter-spacing:0.142px;">Basic authentication username</div>
<svg style="position:absolute;left:1263px;top:1045px;" width="32" height="32" viewBox="0 0 32 32"><circle cx="16" cy="16" r="14" fill="none" stroke="#3f7fc8" stroke-width="3"/><rect x="14.5" y="14" width="3" height="10" rx="1" fill="#3f7fc8"/><circle cx="16" cy="9.5" r="1.9" fill="#3f7fc8"/></svg>
<div class="t" style="left:1574.00px;top:1042.03px;font-size:23px;line-height:32px;color:#e4e4e4;font-weight:400;letter-spacing:0.346px;">optional</div>
<div style="position:absolute;left:862px;top:1082px;width:796px;height:48px;box-sizing:border-box;border:2px solid #4a4948"></div>
<div class="t" style="left:863px;top:1149.09px;font-size:28.6px;line-height:40px;color:#dcdcdc;font-weight:400;letter-spacing:0.170px;">Basic authentication password</div>
<svg style="position:absolute;left:1259px;top:1152px;" width="32" height="32" viewBox="0 0 32 32"><circle cx="16" cy="16" r="14" fill="none" stroke="#3f7fc8" stroke-width="3"/><rect x="14.5" y="14" width="3" height="10" rx="1" fill="#3f7fc8"/><circle cx="16" cy="9.5" r="1.9" fill="#3f7fc8"/></svg>
<div class="t" style="left:1574.00px;top:1148.03px;font-size:23px;line-height:32px;color:#e4e4e4;font-weight:400;letter-spacing:0.346px;">optional</div>
<div style="position:absolute;left:862px;top:1189px;width:796px;height:47px;box-sizing:border-box;border:2px solid #4a4948"></div>
<div class="t" style="left:863px;top:1255.09px;font-size:28.6px;line-height:40px;color:#dcdcdc;font-weight:400;letter-spacing:-0.284px;">HTTP headers</div>
<svg style="position:absolute;left:1051px;top:1258px;" width="32" height="32" viewBox="0 0 32 32"><circle cx="16" cy="16" r="14" fill="none" stroke="#3f7fc8" stroke-width="3"/><rect x="14.5" y="14" width="3" height="10" rx="1" fill="#3f7fc8"/><circle cx="16" cy="9.5" r="1.9" fill="#3f7fc8"/></svg>
<div class="t" style="left:1574.00px;top:1255.03px;font-size:23px;line-height:32px;color:#e4e4e4;font-weight:400;letter-spacing:0.346px;">optional</div>
<div style="position:absolute;left:840px;top:1302px;width:1200px;height:114px;box-sizing:border-box;background:#292827;border:2px solid #4a4846"></div>
<div style="position:absolute;left:1304px;top:1326px;width:163px;height:60px;box-sizing:border-box;border:2px solid #6a6866;background:#232221"></div>
<div class="t" style="left:1331.00px;top:1336.09px;font-size:28.6px;line-height:40px;color:#f4f4f4;font-weight:400;letter-spacing:-0.321px;">Previous</div>
<div style="position:absolute;left:1480px;top:1326px;width:110px;height:60px;box-sizing:border-box;border:2px solid #353433;background:#272625"></div>
<div class="t" style="left:1506.00px;top:1336.09px;font-size:28.6px;line-height:40px;color:#52514f;font-weight:400;letter-spacing:-0.266px;">Next</div>
<div style="position:absolute;left:1603px;top:1326px;width:105px;height:60px;box-sizing:border-box;border:2px solid #353433;background:#272625"></div>
<div class="t" style="left:1629.60px;top:1336.09px;font-size:28.6px;line-height:40px;color:#52514f;font-weight:400;letter-spacing:-0.218px;">Test</div>
<div style="position:absolute;left:1720px;top:1326px;width:127px;height:60px;box-sizing:border-box;border:2px solid #353433;background:#272625"></div>
<div class="t" style="left:1746.60px;top:1336.09px;font-size:28.6px;line-height:40px;color:#52514f;font-weight:400;letter-spacing:-0.496px;">Finish</div>
<div style="position:absolute;left:1858px;top:1326px;width:141px;height:60px;box-sizing:border-box;border:2px solid #6a6866;background:#232221"></div>
<div class="t" style="left:1885.00px;top:1336.09px;font-size:28.6px;line-height:40px;color:#f4f4f4;font-weight:400;letter-spacing:-0.403px;">Cancel</div>
<svg style="position:absolute;left:2008px;top:1387px;" width="26" height="24" viewBox="0 0 26 24"><path d="M2 23 L22 1 M10 23 L22 10 M18 23 L22 19" stroke="#222120" stroke-width="2.2"/></svg>
</body></html>
